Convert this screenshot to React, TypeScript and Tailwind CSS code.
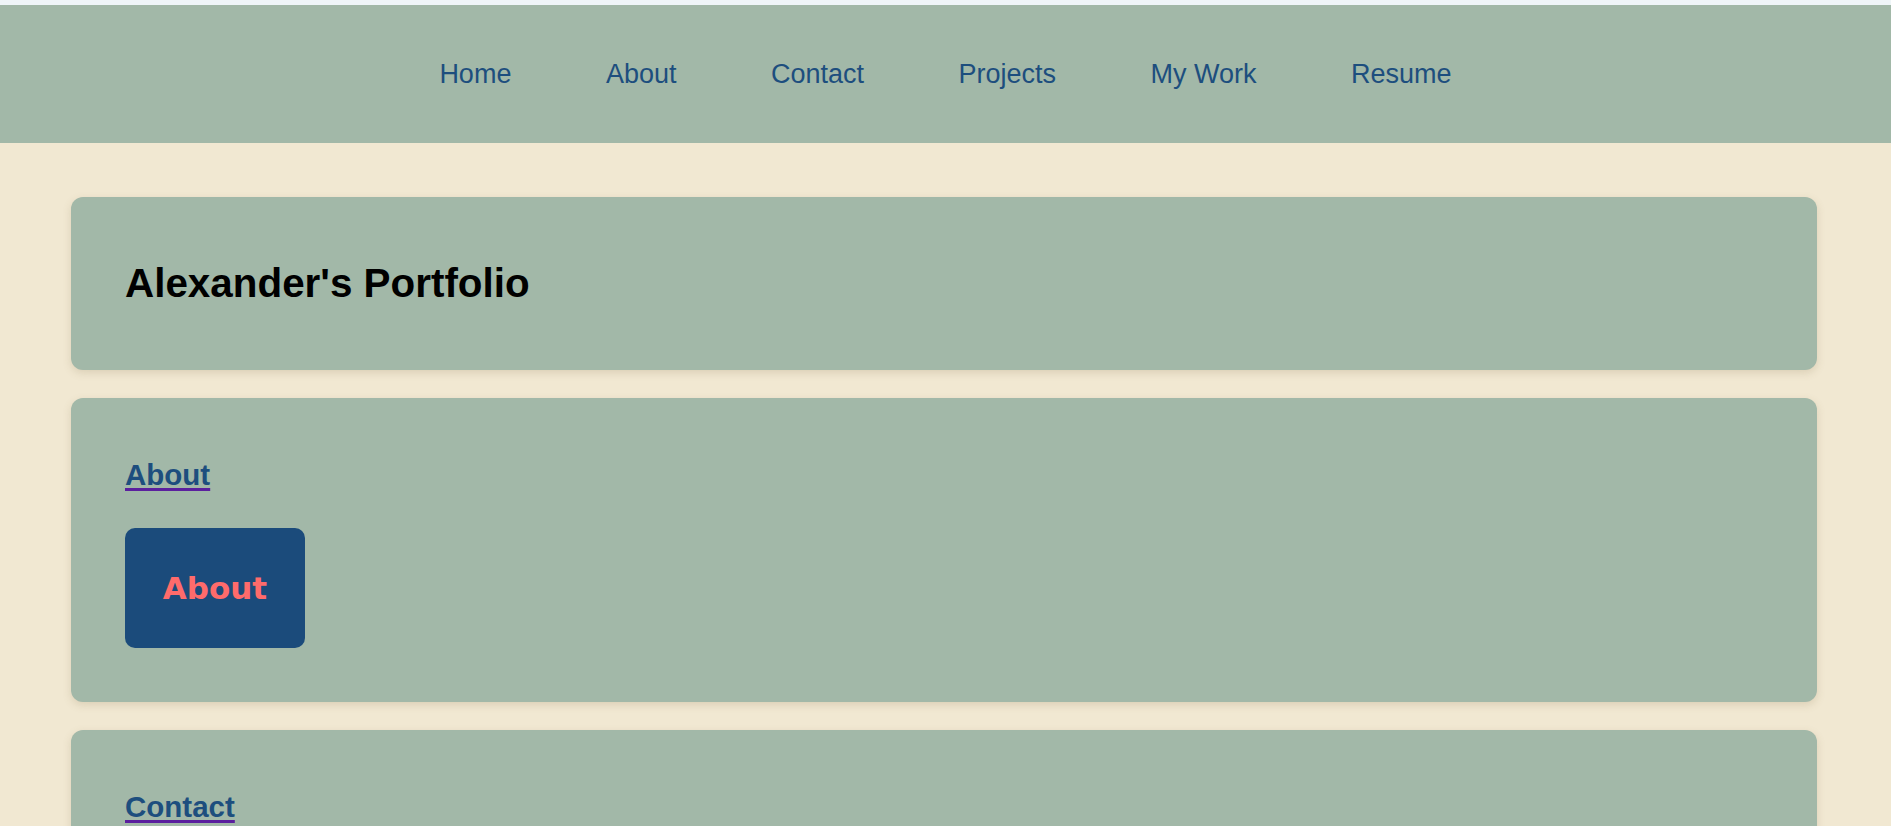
import React from "react";

const navLinks = ["Home", "About", "Contact", "Projects", "My Work", "Resume"];

const Card = ({ children, className = "" }: { children: React.ReactNode; className?: string }) => (
  <section
    className={`rounded-[12px] bg-[#a2b8a8] px-[54px] shadow-[0_3px_8px_rgba(120,100,60,0.18)] ${className}`}
  >
    {children}
  </section>
);

const SectionLink = ({ label }: { label: string }) => (
  <a
    href={`#${label.toLowerCase()}`}
    className="text-[29.5px] font-bold leading-[33px] text-[#1d4e7e] underline decoration-[#5b1f9e] decoration-[3px] underline-offset-[3px]"
  >
    {label}
  </a>
);

const Tile = ({ label }: { label: string }) => (
  <div className="mt-[36px] flex h-[120px] w-[180px] items-center justify-center rounded-[10px] bg-[#1b4b7b]">
    <span
      className="text-[31px] font-bold text-[#ff6b6b]"
      style={{ fontFamily: '"DejaVu Sans", sans-serif' }}
    >
      {label}
    </span>
  </div>
);

export default function App() {
  return (
    <div
      className="min-h-screen bg-[#f1e8d2]"
      style={{ fontFamily: '"Liberation Sans", Arial, sans-serif' }}
    >
      <div className="h-[5px] bg-[#eff5f8]" />
      {/* top navigation */}
      <nav className="flex h-[138px] items-center justify-center gap-[94.5px] bg-[#a2b8a8]">
        {navLinks.map((link) => (
          <a key={link} href="#" className="text-[27px] text-[#1d4e7e]">
            {link}
          </a>
        ))}
      </nav>

      <main className="flex flex-col gap-[28px] pl-[71px] pr-[74px] pt-[54px]">
        <Card className="pb-[64px] pt-[63px]">
          <h1 className="text-[40.4px] font-bold leading-[46px] text-black">Alexander's Portfolio</h1>
        </Card>

        <Card className="pb-[54px] pt-[60px]">
          <SectionLink label="About" />
          <Tile label="About" />
        </Card>

        <Card className="pb-[54px] pt-[60px]">
          <SectionLink label="Contact" />
          <Tile label="Contact" />
        </Card>
      </main>
    </div>
  );
}
